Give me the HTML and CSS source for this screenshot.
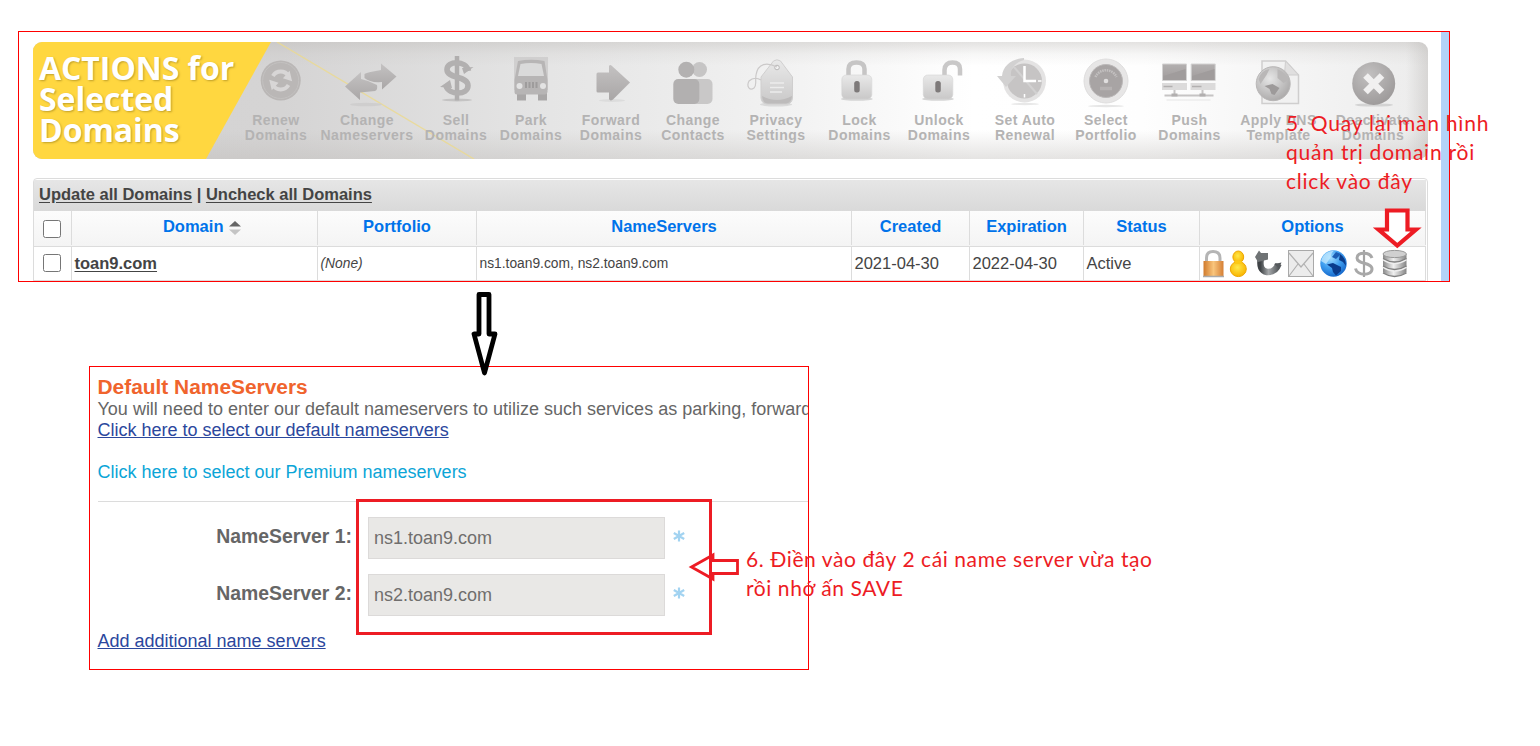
FILE: index.html
```html
<!DOCTYPE html>
<html lang="vi">
<head>
<meta charset="utf-8">
<title>Domain nameserver guide</title>
<link rel="stylesheet" href="styles.css">
</head>
<body>
<svg class="defs" width="0" height="0" aria-hidden="true">
  <defs>
    <linearGradient id="grey" x1="0" y1="0" x2="0" y2="1"><stop offset="0" stop-color="#c4c2c2"/><stop offset="1" stop-color="#a9a6a6"/></linearGradient>
    <linearGradient id="pale" x1="0" y1="0" x2="0" y2="1"><stop offset="0" stop-color="#e9e9e9"/><stop offset="1" stop-color="#c9c8c8"/></linearGradient>
    <linearGradient id="dark" x1="0" y1="0" x2="0" y2="1"><stop offset="0" stop-color="#b3b0b0"/><stop offset="1" stop-color="#a09b9b"/></linearGradient>
    <linearGradient id="gold" x1="0" y1="0" x2="1" y2="0"><stop offset="0" stop-color="#d07a2c"/><stop offset=".5" stop-color="#f9c57c"/><stop offset="1" stop-color="#d57f35"/></linearGradient>
    <radialGradient id="amber" cx=".45" cy=".4" r=".6"><stop offset="0" stop-color="#ffe84a"/><stop offset="1" stop-color="#f9b500"/></radialGradient>
    <radialGradient id="sea" cx=".4" cy=".3" r=".75"><stop offset="0" stop-color="#9fdcff"/><stop offset=".5" stop-color="#3f9ff0"/><stop offset="1" stop-color="#1263c8"/></radialGradient>
    <linearGradient id="steel" x1="0" y1="0" x2="1" y2="0"><stop offset="0" stop-color="#8a8a8a"/><stop offset=".45" stop-color="#f0f0f0"/><stop offset="1" stop-color="#858585"/></linearGradient>
    <linearGradient id="iron" x1="0" y1="0" x2="1" y2="0"><stop offset="0" stop-color="#3f4346"/><stop offset=".45" stop-color="#a5a8aa"/><stop offset="1" stop-color="#55595c"/></linearGradient>
    <radialGradient id="disc" cx=".4" cy=".3" r=".8"><stop offset="0" stop-color="#c2c0c0"/><stop offset="1" stop-color="#999696"/></radialGradient>
    <radialGradient id="orb" cx=".4" cy=".35" r=".7"><stop offset="0" stop-color="#e6e6e6"/><stop offset="1" stop-color="#aaa8a8"/></radialGradient>
  </defs>
</svg>

<section class="domains">
  <div class="domains-main">
    <header class="banner">
      <svg class="banner-art" viewBox="33 42 1395 117" aria-hidden="true">
        <path d="M277 42L474 159" stroke="#ecd98c" stroke-width="1.4" fill="none" opacity=".8"/>
        <path d="M33 42H271L206 159H33Z" fill="#ffd740"/>
      </svg>
      <h1 class="banner-title"><span class="t1">ACTIONS for</span><span class="t2">Selected</span><span class="t3">Domains</span></h1>
      <nav class="actions">
        <a class="action"><svg viewBox="244 50 64 60"><circle cx="280.7" cy="80.5" r="20" fill="#bab7b6"/><circle cx="280.7" cy="80.5" r="18" fill="none" stroke="#c3c1c0" stroke-width="1"/><g transform="rotate(30 280.7 80.500)"><path d="M271.700 80.500A9 9 0 0 1 285.200 72.700M289.700 80.500A9 9 0 0 1 276.200 88.300" fill="none" stroke="#d8d6d6" stroke-width="3.800"/><path d="M283.500 67.500L291 75.500L281.500 77.500ZM277.900 93.500L270.400 85.500L279.900 83.500Z" fill="#d8d6d6"/></g></svg><span>Renew<br>Domains</span></a>
        <a class="action"><svg viewBox="335 50 64 60"><ellipse cx="366" cy="104.500" rx="16" ry="1.800" fill="#cfcece"/><path d="M345 86.500L361 72V79L368 81L377 85Q378 90 375 91L360 92.500V100Z" fill="url(#grey)"/><path d="M364.500 74Q366 72.500 381 70V63.500L396.500 76.500L382 89.500V82Q370 83 364.500 78Z" fill="url(#grey)"/></svg><span>Change<br>Nameservers</span></a>
        <a class="action"><svg viewBox="424 50 64 60"><ellipse cx="457" cy="100" rx="15" ry="1.500" fill="#c4c3c3"/><path d="M457 56V100.500" stroke="#b0aeae" stroke-width="4.500"/><path d="M468.500 71C466 60 447 60.500 447 69.500C447 79 468 75.500 468 85.500C468 95.500 449 95.500 446 86" fill="none" stroke="#b2b0b0" stroke-width="5.600"/><path d="M473.500 67L464 74L462 68ZM440 87L450 80L452 88Z" fill="#b2b0b0"/></svg><span>Sell<br>Domains</span></a>
        <a class="action"><svg viewBox="499 50 64 60"><path d="M514 57H548V90H514Z" fill="#d0cfcf"/><path d="M517 93H526V100.500H517ZM538 93H547V100.500H538Z" fill="#a9a7a7"/><path d="M518 61Q531 58.500 544.500 61L547.500 80V92Q547 94.500 545 94.500H517Q514.500 94.500 514.500 92V80Z" fill="#b7b5b5"/><path d="M520.500 64Q531 62 541.500 64L544 76H518Z" fill="#dadada"/><circle cx="519.500" cy="86" r="3" fill="#e3e3e3"/><circle cx="543" cy="86" r="3" fill="#e3e3e3"/><path d="M526 82V88M529.500 82V88M533 82V88M536.500 82V88" stroke="#9e9c9c" stroke-width="2"/></svg><span>Park<br>Domains</span></a>
        <a class="action"><svg viewBox="579 50 64 60"><ellipse cx="612" cy="100.500" rx="13" ry="1.500" fill="#dcdcdc"/><path d="M598 72.500H609V66Q610 64 612 66L630 82.500L613 99.500Q610 101.500 609 99V92.500H598Q596.500 92.500 596.500 91V74Q596.500 72.500 598 72.500Z" fill="url(#grey)"/></svg><span>Forward<br>Domains</span></a>
        <a class="action"><svg viewBox="661 50 64 60"><circle cx="699.500" cy="69.500" r="7.500" fill="#c6c5c5"/><rect x="688" y="79" width="24.500" height="25" rx="5" fill="#c9c8c8"/><circle cx="686.300" cy="69.700" r="8" fill="#b3b1b1"/><rect x="673.300" y="79" width="26" height="25" rx="5" fill="#b2b0b0"/></svg><span>Change<br>Contacts</span></a>
        <a class="action"><svg viewBox="744 50 64 60"><ellipse cx="776" cy="104.500" rx="16" ry="2" fill="#dadada"/><path d="M773.500 61Q777 58.500 780.500 61L792.500 77V98Q792 103.500 787 104H767Q761.500 103.500 761 98V77Z" fill="url(#pale)" stroke="#cfcece"/><path d="M762 96Q763 103.500 768 103.500H786Q791.500 103 792 96Q777 104 762 96Z" fill="#bdbbbb"/><path d="M770 83H784M770 87.500H784M770 92H782" stroke="#ececec" stroke-width="1.300"/><circle cx="777" cy="67.500" r="2.300" fill="#f2f2f2" stroke="#b9b8b8"/><path d="M777 67C767 62 758 63 756 75C755 83 757 85 754 88C750 91 746 87 749 81C753 77 758 78 761 80" fill="none" stroke="#cbc9c9" stroke-width="1.200"/></svg><span>Privacy<br>Settings</span></a>
        <a class="action"><svg viewBox="827.500 50 64 60"><ellipse cx="856.300" cy="99" rx="16" ry="1.800" fill="#d5d5d5"/><path d="M848 78V69Q848 62.500 856 62.500Q864 62.500 864 69V78" fill="none" stroke="#c6c5c5" stroke-width="4.500"/><rect x="841.300" y="75" width="30" height="24" rx="4.500" fill="url(#pale)" stroke="#d4d3d3" stroke-width=".6"/><rect x="853.700" y="81" width="5.500" height="11.500" rx="2.500" fill="#7e7a7a"/></svg><span>Lock<br>Domains</span></a>
        <a class="action"><svg viewBox="907 50 64 60"><ellipse cx="938" cy="99" rx="16" ry="1.800" fill="#d5d5d5"/><path d="M944.500 78V70Q945 62.500 952.500 62.500Q960 62.500 960 69V75.500" fill="none" stroke="#c9c8c8" stroke-width="4.500"/><rect x="923.300" y="75" width="29.500" height="24" rx="4.500" fill="url(#pale)" stroke="#d4d3d3" stroke-width=".6"/><rect x="935.300" y="81" width="5.500" height="11.500" rx="2.500" fill="#7e7a7a"/></svg><span>Unlock<br>Domains</span></a>
        <a class="action"><svg viewBox="993 50 64 60"><ellipse cx="1025" cy="104" rx="14" ry="1.200" fill="#e8e8e8"/><circle cx="1024.500" cy="81" r="21.500" fill="#e4e3e3"/><circle cx="1024.500" cy="81" r="17.500" fill="#c6c4c4"/><path d="M1014 67L1037 94" stroke="#d2d1d1" stroke-width="2"/><path d="M1024.500 66V81H1036" stroke="#fff" stroke-width="2.500" fill="none"/><path d="M1024.500 94V97.500M1038 81H1041.500" stroke="#fff" stroke-width="1.500"/><path d="M1024 58C1011 59 1003 66 1002 76H997L1006 87L1016 76H1011C1010 68 1016 62 1024 60Z" fill="#d2d1d1"/></svg><span>Set Auto<br>Renewal</span></a>
        <a class="action"><svg viewBox="1074 50 64 60"><ellipse cx="1106" cy="106" rx="18" ry="1.200" fill="#e6e6e6"/><circle cx="1106" cy="81" r="22" fill="#e7e6e6" stroke="#dedddd"/><circle cx="1106" cy="81" r="16.500" fill="#a8a4a4" stroke="#bcb9b9"/><path d="M1095.500 77A11.500 11.500 0 0 1 1116.500 77" stroke="#c3c0c0" stroke-width="2.500" stroke-dasharray="1.500 .8" fill="none"/><circle cx="1106" cy="81" r="2.300" fill="#e0dede"/><path d="M1100 88.500H1112" stroke="#b6b2b2" stroke-width="3.500"/></svg><span>Select<br>Portfolio</span></a>
        <a class="action"><svg viewBox="1157.500 50 64 60"><path d="M1162 64H1186V80.500H1162ZM1190.700 64H1214.700V80.500H1190.700Z" fill="url(#dark)" stroke="#d3d2d2"/><path d="M1163 76L1185 69V80H1163ZM1191.500 76L1214 69V80H1191.500Z" fill="#a09c9c"/><path d="M1161.500 83H1186.500V90H1161.500ZM1190 83H1215V90H1190Z" fill="#dcdbdb"/><path d="M1163 86.500H1172M1191.500 86.500H1201" stroke="#b2b0b0" stroke-width="1.500"/><path d="M1164 95.500H1213M1174 90V95M1202 90V95" stroke="#c6c4c4" stroke-width="2"/><path d="M1171 95H1177M1199 95H1205" stroke="#b2afaf" stroke-width="3"/><path d="M1166 100H1210" stroke="#e6e6e6"/></svg><span>Push<br>Domains</span></a>
        <a class="action"><svg viewBox="1246.500 50 64 60"><path d="M1261.500 61H1285L1298 75V103.500H1261.500Z" fill="#f1f1f1" stroke="#cfcece" stroke-width="1.500"/><path d="M1285 61L1284 75H1298Z" fill="#e0dfdf" stroke="#cfcece"/><circle cx="1272.700" cy="83.700" r="17" fill="url(#orb)" stroke="#b8b6b6"/><path d="M1258 79Q1261 70 1269 69L1266 75L1260 84ZM1277 69Q1286 73 1288 80L1283 83L1277 78Z" fill="#b9b7b7"/><path d="M1264 86L1272 84L1279 88L1274 95L1271 94L1269 89Z" fill="#9d9a9a"/></svg><span>Apply DNS<br>Template</span></a>
        <a class="action"><svg viewBox="1341 50 64 60"><ellipse cx="1374" cy="105" rx="19" ry="1.600" fill="#d3d3d3"/><circle cx="1373.700" cy="83.500" r="21.500" fill="url(#disc)"/><path d="M1365.500 75.500L1382 92M1382 75.500L1365.500 92" stroke="#f1f0f0" stroke-width="6.500"/></svg><span>Deactivate<br>Domains</span></a>
      </nav>
    </header>

    <div class="table">
      <div class="toolbar"><a>Update all Domains</a> | <a>Uncheck all Domains</a></div>
      <div class="row head">
        <div class="cell check"><input type="checkbox"></div>
        <div class="cell sorted">Domain <svg class="sort" viewBox="0 0 12 16"><path d="M0 6.500L6 1L12 6.500Z" fill="#666"/><path d="M0 9.500L6 15L12 9.500Z" fill="#c4c4c4"/></svg></div>
        <div class="cell">Portfolio</div>
        <div class="cell">NameServers</div>
        <div class="cell">Created</div>
        <div class="cell">Expiration</div>
        <div class="cell">Status</div>
        <div class="cell">Options</div>
      </div>
      <div class="row">
        <div class="cell check"><input type="checkbox"></div>
        <div class="cell"><a class="domain">toan9.com</a></div>
        <div class="cell small"><i>(None)</i></div>
        <div class="cell small">ns1.toan9.com, ns2.toan9.com</div>
        <div class="cell">2021-04-30</div>
        <div class="cell">2022-04-30</div>
        <div class="cell">Active</div>
        <div class="cell options">
          <svg viewBox="1200 248 210 32">
            <path d="M1206.500 263V258Q1206.500 251.500 1213 251.500Q1220 251.500 1220 258V263" fill="none" stroke="#b5b5b5" stroke-width="3"/><rect x="1203.500" y="261" width="20" height="15" fill="url(#gold)"/><path d="M1203 276.500H1224" stroke="#aaa" stroke-width="1.500"/>
            <ellipse cx="1238.300" cy="269" rx="8" ry="7.600" fill="url(#amber)" stroke="#eda600"/><ellipse cx="1238.300" cy="257" rx="5.400" ry="6" fill="url(#amber)" stroke="#eda600"/><path d="M1234.800 262.500H1241.800" stroke="#fdc915" stroke-width="3"/>
            <path d="M1278.500 264Q1275.500 272.500 1267 272Q1258.500 270.500 1261 258" fill="none" stroke="url(#iron)" stroke-width="6.500"/><path d="M1255 257L1259 250.500L1261 253H1268V259.500L1258 262Z" fill="#6f7375"/><path d="M1274 264L1281.500 262.500L1279 268Z" fill="#55595c"/>
            <rect x="1288.500" y="250.500" width="25" height="26" fill="#ececec" stroke="#a9a9a9"/><path d="M1289 253L1301 267L1313 253M1289 276L1298 264M1313 276L1304 264" fill="none" stroke="#b1b1b1" stroke-width="1.200"/>
            <circle cx="1333.500" cy="263.500" r="13.200" fill="url(#sea)"/><path d="M1340 254Q1346 258 1346 266L1343 262L1339 260Z" fill="#0a3c8c"/><path d="M1327 264.500L1333 263L1341 267L1341 271L1336 275.500L1333 272L1332 268Z" fill="#0a3c8c"/><path d="M1321 261Q1324 251 1334 250.800Q1330 254 1331 257L1326 264Z" fill="#c4e9ff" opacity=".75"/><path d="M1336 252L1341 254L1336 259L1332 257Z" fill="#1d5eb4"/>
            <path d="M1364 250V277" stroke="#a3a3a3" stroke-width="2.200"/><path d="M1372 258C1370 251.500 1357 251.500 1357 258C1357 264.500 1372 262 1372 269C1372 276 1357 276 1355.500 268.500" fill="none" stroke="#a8a8a8" stroke-width="3"/>
            <path d="M1383 254V272.500Q1394.500 280 1406.500 272.500V254Z" fill="url(#steel)"/><ellipse cx="1394.700" cy="254" rx="11.700" ry="3.600" fill="#d0d0d0" stroke="#999"/><path d="M1383 259.500Q1394.500 267 1406.500 259.500M1383 267Q1394.500 274.500 1406.500 267" fill="none" stroke="#eee" stroke-width="2"/><path d="M1383 258.500Q1394.500 265.500 1406.500 258.500M1383 266Q1394.500 273 1406.500 266M1383 273Q1394.500 280 1406.500 273" fill="none" stroke="#808080" stroke-width="1.300"/>
          </svg>
        </div>
      </div>
    </div>
  </div>
  <div class="scrollbar"></div>
</section>

<section class="ns">
  <h2>Default NameServers</h2>
  <p class="hint">You will need to enter our default nameservers to utilize such services as parking, forwarding</p>
  <p><a class="link">Click here to select our default nameservers</a></p>
  <p class="premium">Click here to select our Premium nameservers</p>
  <form class="fields">
    <label><b>NameServer 1:</b><input type="text" value="ns1.toan9.com"><svg class="star" viewBox="0 0 12 12"><path d="M6 .5V11.500M.800 3L11.200 9M11.200 3L.800 9"/></svg></label>
    <label><b>NameServer 2:</b><input type="text" value="ns2.toan9.com"><svg class="star" viewBox="0 0 12 12"><path d="M6 .5V11.500M.800 3L11.200 9M11.200 3L.800 9"/></svg></label>
  </form>
  <a class="link">Add additional name servers</a>
</section>

<div class="note note-5"><span>5. Quay lại màn hình</span><span>quản trị domain rồi</span><span>click vào đây</span></div>
<div class="note note-6"><span>6. Điền vào đây 2 cái name server vừa tạo</span><span>rồi nhớ ấn SAVE</span></div>
<div class="frame"></div>
<svg class="marks" viewBox="0 0 1540 746" aria-hidden="true">
  <path d="M479 294.500H489V334H495L484.500 373L474 334H479Z" fill="none" stroke="#000" stroke-width="4.800" stroke-linejoin="round"/>
  <path d="M1387 210.500H1407.500V229.500H1416L1397.300 245.500L1378.500 229.500H1387Z" fill="#fff" stroke="#ed1c24" stroke-width="4.200"/>
  <path d="M737.500 560.500V573.500H713V579L691.500 567L713 555V560.500Z" fill="#fff" stroke="#ed1c24" stroke-width="2.800"/>
  <path d="M710.500 550V584" stroke="#ed1c24" stroke-width="3"/>
</svg>
</body>
</html>
```
FILE: styles.css
```css
* { box-sizing: border-box; }
body {
  margin: 0;
  width: 1540px;
  height: 746px;
  padding: 31px 0 0 18px;
  background: #fff;
  font-family: "Liberation Sans", Arial, sans-serif;
  overflow: hidden;
  position: relative;
}
.defs { position: absolute; }
h1, h2, p { margin: 0; }

/* Domain list panel */
.domains {
  width: 1432px;
  height: 251px;
  border: 1px solid #f00;
  display: flex;
  overflow: hidden;
}
.domains-main { flex: 1; padding: 10px 13px 0 14px; }
.scrollbar { width: 8px; background: #b3d3f7; }

.banner {
  position: relative;
  width: 1395px;
  height: 117px;
  border-radius: 9px;
  overflow: hidden;
  display: flex;
  background:
    linear-gradient(180deg, rgba(190,187,184,.42) 0, rgba(190,187,184,.12) 12px, rgba(190,187,184,0) 24px, rgba(190,187,184,0) 88px, rgba(190,187,184,.4) 117px),
    linear-gradient(270deg, rgba(190,187,184,.45) 0, rgba(190,187,184,0) 22px),
    linear-gradient(90deg, #d4d3d3 0, #d5d4d4 250px, #e4e4e4 500px, #f1f1f1 740px, #fff 940px, #fefefe 1110px, #ececec 1395px);
}
.banner-art { position: absolute; inset: 0; width: 1395px; height: 117px; }
.banner-title {
  position: relative;
  flex: none;
  width: 207px;
  padding: 11px 0 0 6px;
  font: bold 32px/31px "Open Sans", "Noto Sans", sans-serif;
  letter-spacing: -.05px;
  color: #fff;
  text-shadow: 1px 1px 2px rgba(130,105,20,.5);
  white-space: nowrap;
}
.banner-title span { display: block; }
.t1 { line-height: 30px; }
.actions {
  position: relative;
  flex: none;
  display: grid;
  grid-template-columns: 72px 110px 68px 82px 78px 86px 80px 87px 72px 100px 62px 105px 73px 116px;
  padding-top: 8px;
}
.action { display: flex; flex-direction: column; align-items: center; }
.action svg { width: 64px; height: 60px; flex: none; filter: blur(.4px); }
.action span {
  margin-top: 3px;
  text-align: center;
  font: bold 14px/15px "Liberation Sans", Arial, sans-serif;
  letter-spacing: .45px;
  color: #b4b3b3;
  white-space: nowrap;
}

.table {
  margin-top: 19px;
  width: 1395px;
  border: 1px solid #dcdcdc;
  border-radius: 4px 4px 0 0;
  padding: 1px 1px 0 0;
  font-size: 16.500px;
  color: #444;
}
.toolbar {
  height: 31px;
  padding-left: 5px;
  background: linear-gradient(#e6e6e6, #d9d9d9);
  font-weight: bold;
  line-height: 29px;
}
.toolbar a, .domain { text-decoration: underline; text-underline-offset: 2px; }
.domain { font-weight: bold; }
.row {
  display: grid;
  grid-template-columns: 38px 246px 159px 375px 118px 114px 116px 226px;
  height: 34px;
  border-bottom: 1px solid #dcdcdc;
}
.cell { border-right: 1px solid #dcdcdc; padding-left: 2.500px; line-height: 33px; white-space: nowrap; }
.head { height: 36px; background: linear-gradient(#fcfcfc, #f4f4f4); }
.head .cell { padding: 0; text-align: center; color: #0073ea; font-weight: bold; line-height: 30px; margin-bottom: 1px; }
.head .sorted { padding-left: 15px; }
.row .check { padding: 0 2px 0 0; display: flex; align-items: center; justify-content: center; }
.head .check { padding-top: 2px; padding-right: 2px; }
.row:last-child .check { padding-bottom: 2px; }
.check input { width: 18px; height: 18px; margin: 0; }
.sort { width: 12px; height: 16px; vertical-align: -4px; margin-left: 1px; }
.small { font-size: 13.800px; }
.options { padding: 0; }
.options svg { display: block; width: 210px; height: 32px; margin-top: 1px; filter: blur(.3px); }

/* Nameserver form panel */
.ns {
  width: 720px;
  height: 304px;
  margin: 84px 0 0 71px;
  border: 1px solid #f00;
  padding: 8px 0 0 7.500px;
  font-size: 18px;
  line-height: 21px;
  color: #666;
  overflow: hidden;
}
.ns h2 { font-size: 20.900px; line-height: 24px; color: #f0642d; }
.ns p { white-space: nowrap; }
.link { color: #2b479d; text-decoration: underline; }
.ns .premium { margin-top: 21px; color: #0ba5d7; }
.fields { margin-top: 18px; border-top: 1px solid #dcdcdc; padding-top: 15px; height: 130px; display: grid; gap: 15px; grid-auto-rows: 42px; }
.fields label { display: flex; }
.fields b { width: 254.500px; text-align: right; font-size: 19.400px; line-height: 38px; }
.fields input {
  width: 297px;
  margin-left: 16px;
  padding: 0 5px;
  border: 1px solid #dcdad9;
  background: #e9e8e6;
  color: #706e6d;
  font: 18px "Liberation Sans", Arial, sans-serif;
}
.star { width: 12px; height: 12px; margin: 13px 0 0 8px; fill: none; stroke: #a2d3f1; stroke-width: 2.200; }

/* Hand-placed annotations over the two panels */
.note {
  position: absolute;
  color: #ed1c24;
  font: 21px/29px Lato, "Noto Sans", sans-serif;
  letter-spacing: .58px;
  white-space: nowrap;
}
.note span { display: block; }
.note-5 { left: 1286px; top: 108px; letter-spacing: .78px; }
.note-6 { left: 746px; top: 544px; }
.frame { position: absolute; left: 356px; top: 499px; width: 356px; height: 136px; border: 3px solid #ed1c24; }
.marks { position: absolute; left: 0; top: 0; width: 1540px; height: 746px; pointer-events: none; }
```
